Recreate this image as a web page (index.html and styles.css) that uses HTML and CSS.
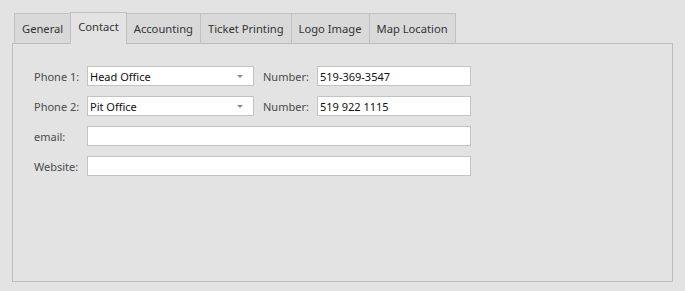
FILE: index.html
```html
<!DOCTYPE html>
<html lang="en">
<head>
    <meta charset="UTF-8">
    <meta name="viewport" content="width=device-width, initial-scale=1.0">
    <title>Contact</title>
    <link rel="stylesheet" href="styles.css">
</head>
<body>
    <div class="tab-control">
        <div class="tabs">
            <div class="tab">General</div>
            <div class="tab active">Contact</div>
            <div class="tab">Accounting</div>
            <div class="tab">Ticket Printing</div>
            <div class="tab">Logo Image</div>
            <div class="tab">Map Location</div>
        </div>

        <div class="panel">
            <form class="contact-form">
                <label for="phone1">Phone 1:</label>
                <div class="combo">
                    <span id="phone1">Head Office</span>
                    <span class="arrow"></span>
                </div>
                <label for="number1" class="number-label">Number:</label>
                <input type="text" id="number1" value="519-369-3547">

                <label for="phone2">Phone 2:</label>
                <div class="combo">
                    <span id="phone2">Pit Office</span>
                    <span class="arrow"></span>
                </div>
                <label for="number2" class="number-label">Number:</label>
                <input type="text" id="number2" value="519 922 1115">

                <label for="email">email:</label>
                <input type="text" id="email" class="wide">

                <label for="website">Website:</label>
                <input type="text" id="website" class="wide">
            </form>
        </div>
    </div>
</body>
</html>
```

FILE: styles.css
```css
body {
    margin: 0;
    background-color: #e3e3e3;
    font-family: "Noto Sans", "Open Sans", sans-serif;
    font-size: 11px;
}

.tab-control {
    padding: 12px 12px 9px 12px;
}

.tabs {
    display: flex;
    align-items: flex-end;
    padding-left: 2px;
    height: 31px;
}

.tab {
    height: 29px;
    line-height: 30px;
    padding: 0 7px;
    margin-left: -1px;
    background-color: #d9d9d9;
    border: 1px solid #c1c1c1;
    border-bottom: none;
    color: #333;
    font-size: 11.2px;
    position: relative;
}

.tab:first-child {
    margin-left: 0;
}

.tab.active {
    height: 31px;
    line-height: 28px;
    background-color: #e3e3e3;
    margin-bottom: -1px;
    z-index: 1;
}

.panel {
    height: 237px;
    border: 1px solid #bcbcbc;
    background-color: #e3e3e3;
}

.contact-form {
    display: grid;
    grid-template-columns: 53px 167px 63px 154px;
    grid-auto-rows: 20px;
    row-gap: 10px;
    padding: 22px 0 0 21px;
}

.contact-form label {
    display: flex;
    align-items: center;
    color: #4a4a4a;
}

.contact-form .number-label {
    padding-left: 9px;
}

.combo,
.contact-form input {
    box-sizing: border-box;
    height: 20px;
    border: 1px solid #c3c3c3;
    background-color: #fff;
    color: #111;
    font-family: inherit;
    font-size: 11px;
}

.combo {
    display: flex;
    align-items: center;
    justify-content: space-between;
    padding: 0 10px 0 2px;
}

.arrow {
    width: 0;
    height: 0;
    border-left: 3px solid transparent;
    border-right: 3px solid transparent;
    border-top: 3px solid #8a8a8a;
    margin-top: 1px;
}

.contact-form input {
    width: 100%;
    padding: 0 2px;
    margin: 0;
    outline: none;
}

.contact-form input.wide {
    grid-column: 2 / 5;
}
```
